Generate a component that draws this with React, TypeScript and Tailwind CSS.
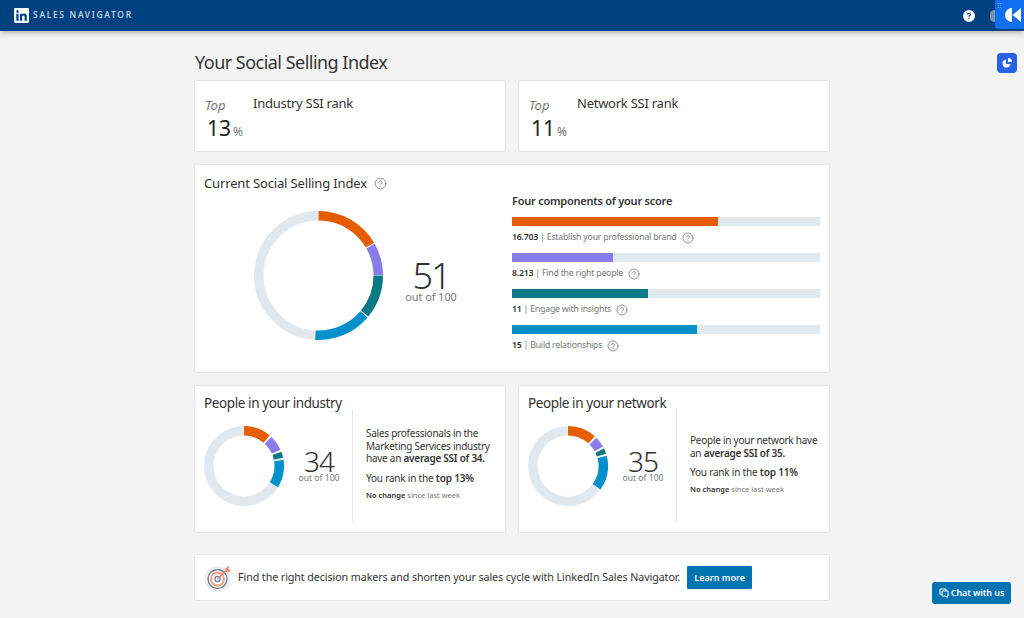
import { CircleHelp } from "lucide-react";
import { FaLinkedin } from "react-icons/fa";
import { FaCircleQuestion } from "react-icons/fa6";

type Seg = { from: number; to: number; color: string };

function arc(c: number, r: number, from: number, to: number) {
  const pt = (a: number) => {
    const t = ((a - 90) * Math.PI) / 180;
    return `${c + r * Math.cos(t)} ${c + r * Math.sin(t)}`;
  };
  return `M ${pt(from)} A ${r} ${r} 0 ${to - from > 180 ? 1 : 0} 1 ${pt(to)}`;
}

function Donut({ size, stroke, segs }: { size: number; stroke: number; segs: Seg[] }) {
  const c = size / 2;
  const r = c - stroke / 2;
  const end = segs[segs.length - 1].to;
  return (
    <svg width={size} height={size} viewBox={`0 0 ${size} ${size}`} className="shrink-0">
      <path d={arc(c, r, end + 1, 359.4)} fill="none" stroke="#e1e8ee" strokeWidth={stroke} />
      {segs.map((s) => (
        <path key={s.from} d={arc(c, r, s.from, s.to)} fill="none" stroke={s.color} strokeWidth={stroke} />
      ))}
    </svg>
  );
}

const orange = "#e65c00";
const purple = "#8a7ce8";
const teal = "#097985";
const blue = "#0091ca";

const bars = [
  { value: "16.703", label: "Establish your professional brand", pct: 67, color: orange },
  { value: "8.213", label: "Find the right people", pct: 32.8, color: purple },
  { value: "11", label: "Engage with insights", pct: 44, color: teal },
  { value: "15", label: "Build relationships", pct: 60, color: blue },
];

const card = "bg-white border border-[#e6e6e6] rounded-[2px]";

function RankCard({ title, value }: { title: string; value: string }) {
  return (
    <div className={`${card} h-[72px] flex pl-[10px] pt-[14px]`}>
      <div className="w-[48px]">
        <div className="text-[13px] leading-[20px] italic text-[#777]">Top</div>
        <div className="pl-[2px] flex items-baseline gap-[2px] leading-[26px]">
          <span className="text-[21px] text-[#222]">{value}</span>
          <span className="text-[12px] text-[#777]">%</span>
        </div>
      </div>
      <div className="-mt-[1px] text-[13px] leading-[18px] tracking-[-0.25px] text-[#333]">{title}</div>
    </div>
  );
}

function PeopleCard({
  title,
  score,
  segs,
  lines,
  topGap,
}: {
  title: string;
  score: number;
  segs: Seg[];
  lines: React.ReactNode;
  topGap: string;
}) {
  return (
    <div className={`${card} h-[148px] px-[9px] pt-[7px]`}>
      <h2 className="text-[13.5px] leading-[20px] tracking-[-0.4px] text-[#333] font-normal">{title}</h2>
      <div className="flex -mt-[3px]">
        <div className="w-[148px] flex items-start pt-[16px]">
          <Donut size={80} stroke={9.5} segs={segs} />
          <div className="ml-[13px] mt-[23px] w-[44px] text-center shrink-0">
            <div className="text-[28px] leading-[24px] tracking-[-1px] font-light text-[#333]">{score}</div>
            <div className="text-[8.6px] leading-[10px] text-[#777] whitespace-nowrap">out of 100</div>
          </div>
        </div>
        <div className={`h-[112px] border-l border-[#e6e6e6] pl-[13px] flex-1 ${topGap}`}>{lines}</div>
      </div>
    </div>
  );
}

function PeopleText({ body, rank }: { body: React.ReactNode; rank: string }) {
  return (
    <div className="text-[#333]">
      <p className="text-[10px] leading-[12.5px] tracking-[-0.25px] whitespace-nowrap">{body}</p>
      <p className="text-[10px] leading-[14px] tracking-[-0.2px] mt-[6px]">
        You rank in the <span className="font-semibold">top {rank}</span>
      </p>
      <p className="text-[7.5px] leading-[12px] mt-[4px] text-[#777]">
        <span className="font-semibold text-[#333]">No change</span> since last week
      </p>
    </div>
  );
}

function RightWidgets() {
  return (
    <>
      <div className="absolute right-0 top-0 w-[29px] h-[29px] bg-[#0f6ff0] rounded-bl-[3px]">
        <svg width="29" height="29" viewBox="0 0 29 29">
          <path d="M17 8 L17 22 A7 7 0 0 1 17 8 Z" fill="#fff" />
          <path d="M26 8 L26 22 L17.5 15 Z" fill="#fff" />
          <g fill="#5c9cf5">
            <rect x="3" y="3" width="1" height="1" />
            <rect x="5" y="3" width="1" height="1" />
            <rect x="3" y="5" width="1" height="1" />
            <rect x="5" y="5" width="1" height="1" />
            <rect x="3" y="7" width="1" height="1" />
            <rect x="5" y="7" width="1" height="1" />
          </g>
        </svg>
      </div>
      <div className="absolute left-[997px] top-[53px] w-[20px] h-[20px] bg-[#2a62e3] rounded-[4px] flex items-center justify-center">
        <svg width="12" height="12" viewBox="0 0 12 12">
          <path d="M5 2.5 A4 4 0 1 0 9.5 7 L5 7 Z" fill="#fff" />
          <path d="M7 1 A4 4 0 0 1 11 5 L7 5 Z" fill="#fff" />
        </svg>
      </div>
      <button className="absolute left-[932px] top-[582px] w-[79px] h-[22px] bg-[#0073b1] rounded-[3px] text-white text-[9px] tracking-[-0.1px] font-semibold flex items-center justify-center gap-[2px]">
        <svg width="10" height="10" viewBox="0 0 10 10" fill="none" stroke="#fff" strokeWidth="1">
          <path d="M3 6.5 H1 V1 H7 V3" />
          <path d="M3 3 H9 V8 H8 V9.5 L6.5 8 H3 Z" />
        </svg>
        Chat with us
      </button>
    </>
  );
}

export default function App() {
  return (
    <div className="relative h-[618px] overflow-hidden bg-[#f3f3f3] font-['Noto_Sans',sans-serif]">
      <header className="h-[31px] bg-[#004182] shadow-[0_2px_5px_rgba(0,0,0,0.25)] flex items-center pl-[13px]">
        <FaLinkedin className="text-white" size={17} />
        <span className="ml-[3px] text-[8.5px] tracking-[0.2em] text-[#d5e0ec] font-medium">SALES NAVIGATOR</span>
        <div className="ml-auto mr-[49px] flex items-center gap-[15px]">
          <FaCircleQuestion className="text-white" size={12} />
        </div>
        <div className="absolute left-[990px] top-[10px] w-[9px] h-[12px] rounded-full bg-[#7f93ab]" />
      </header>

      <main className="w-[636px] ml-[194px]">
        <h1 className="mt-[19px] ml-[1px] text-[18px] leading-[24px] tracking-[-0.52px] text-[#333] font-normal">
          Your Social Selling Index
        </h1>

        <div className="grid grid-cols-2 gap-[12px] mt-[6px]">
          <RankCard title="Industry SSI rank" value="13" />
          <RankCard title="Network SSI rank" value="11" />
        </div>

        <section className={`${card} h-[209px] mt-[12px] pl-[9px] pt-[9px] flex`}>
          <div className="w-[308px] shrink-0">
            <div className="flex items-center gap-[7px]">
              <h2 className="text-[13px] leading-[18px] tracking-[-0.15px] text-[#333] font-normal">
                Current Social Selling Index
              </h2>
              <CircleHelp size={13} strokeWidth={1.3} className="text-[#666]" />
            </div>
            <div className="flex items-start mt-[19px] pl-[50px]">
              <Donut
                size={129}
                stroke={9.5}
                segs={[
                  { from: 0, to: 59.5, color: orange },
                  { from: 60.5, to: 89.5, color: purple },
                  { from: 90, to: 129.5, color: teal },
                  { from: 130.5, to: 183, color: blue },
                ]}
              />
              <div className="ml-[20px] mt-[50px] w-[56px] text-center shrink-0">
                <div className="text-[36px] leading-[30px] tracking-[-2px] font-light text-[#333]">51</div>
                <div className="text-[10.8px] leading-[12px] text-[#777] whitespace-nowrap">out of 100</div>
              </div>
            </div>
          </div>
          <div className="w-[308px] pt-[19px]">
            <h3 className="text-[11px] leading-[16px] tracking-[-0.24px] font-semibold text-[#333]">
              Four components of your score
            </h3>
            <div className="mt-[8px] flex flex-col gap-[5px]">
              {bars.map((b) => (
                <div key={b.label}>
                  <div className="h-[9px] bg-[#e1e8ee]">
                    <div className="h-full" style={{ width: `${b.pct}%`, backgroundColor: b.color }} />
                  </div>
                  <div className="h-[22px] pt-[1px] flex items-center text-[8.8px] tracking-[-0.25px] text-[#777]">
                    <span className="font-semibold text-[#333]">{b.value}</span>
                    <span className="ml-[2px]">| {b.label}</span>
                    <CircleHelp size={12} strokeWidth={1.4} className="ml-[5px] text-[#666]" />
                  </div>
                </div>
              ))}
            </div>
          </div>
        </section>

        <div className="grid grid-cols-2 gap-[12px] mt-[12px]">
          <PeopleCard
            title="People in your industry"
            score={34}
            topGap="pt-[17px]"
            segs={[
              { from: 0, to: 40, color: orange },
              { from: 43, to: 66, color: purple },
              { from: 69, to: 78, color: teal },
              { from: 81, to: 122, color: blue },
            ]}
            lines={
              <PeopleText
                rank="13%"
                body={
                  <>
                    Sales professionals in the
                    <br />
                    Marketing Services industry
                    <br />
                    have an <span className="font-semibold">average SSI of 34.</span>
                  </>
                }
              />
            }
          />
          <PeopleCard
            title="People in your network"
            score={35}
            topGap="pt-[24px]"
            segs={[
              { from: 0, to: 42, color: orange },
              { from: 45, to: 61, color: purple },
              { from: 64, to: 72, color: teal },
              { from: 75, to: 126, color: blue },
            ]}
            lines={
              <PeopleText
                rank="11%"
                body={
                  <>
                    People in your network have
                    <br />
                    an <span className="font-semibold">average SSI of 35.</span>
                  </>
                }
              />
            }
          />
        </div>

        <div className={`${card} h-[47px] mt-[21px] flex items-center pl-[9px]`}>
          <svg width="28" height="28" viewBox="0 0 28 28" className="shrink-0">
            <circle cx="13.5" cy="15" r="13" fill="#e8eff6" />
            <circle cx="13.5" cy="15" r="11" fill="#fff" />
            <circle cx="13.5" cy="15" r="9.5" fill="none" stroke="#6f7f8f" strokeWidth="1.4" />
            <circle cx="13.5" cy="15" r="6.5" fill="none" stroke="#f29a80" strokeWidth="1.8" />
            <circle cx="13.5" cy="15" r="2.6" fill="none" stroke="#6f7f8f" strokeWidth="1.2" />
            <path d="M13.5 15 L22 6.5" stroke="#e8805f" strokeWidth="1.2" />
            <path d="M21 4.5 L25.5 1.5 L24.5 5 L27 7 L23 8.5 Z" fill="#f0876a" />
          </svg>
          <p className="ml-[6px] text-[10.7px] tracking-[-0.08px] text-[#333] whitespace-nowrap">
            Find the right decision makers and shorten your sales cycle with LinkedIn Sales Navigator.
          </p>
          <button className="ml-[7px] w-[65px] h-[23px] bg-[#0073b1] rounded-[1px] text-white text-[9px] font-semibold">
            Learn more
          </button>
        </div>
      </main>

      <RightWidgets />
    </div>
  );
}
